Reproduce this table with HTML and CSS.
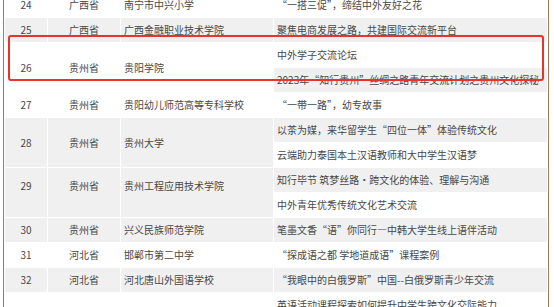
FILE: index.html
```html
<!DOCTYPE html>
<html lang="zh">
<head>
<meta charset="utf-8">
<link rel="stylesheet" href="styles.css">
</head>
<body>
<div class="frame">
  <table class="list">
    <colgroup>
      <col class="c-no"><col class="c-prov"><col class="c-school"><col class="c-title">
    </colgroup>
    <tbody>
      <tr><td class="num">24</td><td class="ctr">广西省</td><td>南宁市中兴小学</td><td>“一搭三促”，缔结中外友好之花</td></tr>
      <tr class="g"><td class="num">25</td><td class="ctr">广西省</td><td>广西金融职业技术学院</td><td>聚焦电商发展之路，共建国际交流新平台</td></tr>
      <tr><td class="num" rowspan="2">26</td><td class="ctr" rowspan="2">贵州省</td><td rowspan="2">贵阳学院</td><td>中外学子交流论坛</td></tr>
      <tr class="g"><td>2023年“知行贵州”丝绸之路青年交流计划之贵州文化探秘</td></tr>
      <tr><td class="num">27</td><td class="ctr">贵州省</td><td>贵阳幼儿师范高等专科学校</td><td>“一带一路”，幼专故事</td></tr>
      <tr class="g"><td class="num" rowspan="2">28</td><td class="ctr" rowspan="2">贵州省</td><td rowspan="2">贵州大学</td><td>以茶为媒，来华留学生“四位一体”体验传统文化</td></tr>
      <tr><td>云端助力泰国本土汉语教师和大中学生汉语梦</td></tr>
      <tr class="g"><td class="num up" rowspan="2">29</td><td class="ctr up" rowspan="2">贵州省</td><td class="up" rowspan="2">贵州工程应用技术学院</td><td>知行毕节 筑梦丝路·跨文化的体验、理解与沟通</td></tr>
      <tr><td>中外青年优秀传统文化艺术交流</td></tr>
      <tr class="g"><td class="num">30</td><td class="ctr">贵州省</td><td>兴义民族师范学院</td><td>笔墨文香“语”你同行—中韩大学生线上语伴活动</td></tr>
      <tr><td class="num">31</td><td class="ctr">河北省</td><td>邯郸市第二中学</td><td>“探成语之都 学地道成语”课程案例</td></tr>
      <tr class="g"><td class="num">32</td><td class="ctr">河北省</td><td>河北唐山外国语学校</td><td>“我眼中的白俄罗斯”中国--白俄罗斯青少年交流</td></tr>
      <tr><td class="num" rowspan="3">33</td><td class="ctr" rowspan="3">河北省</td><td rowspan="3">河北省石家庄市第二中学</td><td>英语活动课程探索如何提升中学生跨文化交际能力</td></tr>
      <tr class="g"><td>中外学生文化交流活动</td></tr>
      <tr><td>国际理解教育课程</td></tr>
    </tbody>
  </table>
  <div class="mark"></div>
</div>
</body>
</html>
```

FILE: styles.css
```css
html, body {
  margin: 0;
  padding: 0;
  background: #ffffff;
  overflow: hidden;
}

body {
  width: 554px;
  height: 307px;
  font-family: "Noto Sans CJK SC", "Noto Sans", sans-serif;
  font-size: 10px;
  color: #474747;
}

.frame {
  position: relative;
  margin-left: 3px;
  width: 544px;
  border-left: 1px solid #9a7b5c;
  border-right: 1px solid #9a7b5c;
  height: 330px;
}

.list {
  border-collapse: collapse;
  table-layout: fixed;
  width: 544px;
  margin-top: -8px;
}

.c-no { width: 43px; }
.c-prov { width: 73px; }
.c-school { width: 153px; }
.c-title { width: auto; }

.list td {
  height: 25px;
  padding: 0 3px;
  border: 1px solid #ffffff;
  box-sizing: border-box;
  vertical-align: middle;
  line-height: 14px;
  white-space: nowrap;
  overflow: hidden;
}

.list tr.g td { background: #f0f0f0; }

.list td.num, .list td.ctr { text-align: center; }

.list td.up { padding-bottom: 14px; }

.mark {
  position: absolute;
  left: 4px;
  top: 43px;
  width: 532px;
  height: 42px;
  border: 2px solid #e8322c;
  border-radius: 3px;
}
```
